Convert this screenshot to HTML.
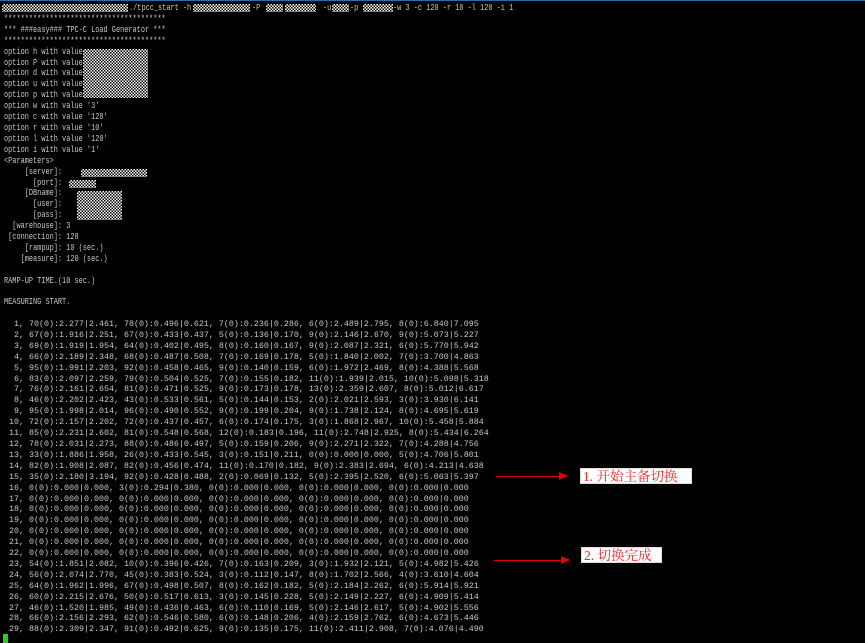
<!DOCTYPE html>
<html><head><meta charset="utf-8"><style>
html,body{margin:0;padding:0;background:#000;width:865px;height:643px;overflow:hidden;position:relative}
.top{position:absolute;left:0;top:0;width:865px;height:1px;background:#2a6bb5}
pre{margin:0;position:absolute;left:4px;font-family:"Liberation Mono",monospace;color:#c9c9c9;white-space:pre}
#h{top:3px;font-size:9.2px;line-height:10.9px;transform:scaleX(0.752);transform-origin:0 0}
.c{position:absolute;top:3px;font-family:"Liberation Mono",monospace;color:#c9c9c9;white-space:pre;font-size:9.2px;line-height:10.9px;transform:scaleX(0.752);transform-origin:0 0}
#d{top:319px;left:4px;font-size:8.33px;line-height:10.9px}
.ck{position:absolute;background:repeating-conic-gradient(#fff 0 25%,#000 0 50%) 0 0/3px 3px}
.bx{position:absolute;background:#fff;color:#ff2020;font-family:"Liberation Serif","Noto Serif CJK SC",serif;font-size:13.5px;line-height:16px;padding:0 2px;box-sizing:border-box;white-space:nowrap;border:1px solid #ddd}
.ln{position:absolute;height:1px;background:#e00000}
.ah{position:absolute;width:0;height:0;border-top:4px solid transparent;border-bottom:4px solid transparent;border-left:9px solid #e00000}
.cur{position:absolute;left:3px;top:634px;width:5px;height:9px;background:#22d022}
</style></head><body>
<div class="top"></div>
<div class="c" style="left:129px">./tpcc_start -h</div>
<div class="c" style="left:252px">-P</div>
<div class="c" style="left:274px">-d</div>
<div class="c" style="left:323px">-u</div>
<div class="c" style="left:350px">-p</div>
<div class="c" style="left:393px">-w 3 -c 128 -r 10 -l 120 -i 1</div>
<pre id="h">

***************************************
*** ###easy### TPC-C Load Generator ***
***************************************
option h with value
option P with value
option d with value
option u with value
option p with value
option w with value '3'
option c with value '128'
option r with value '10'
option l with value '120'
option i with value '1'
&lt;Parameters&gt;
     [server]:
       [port]:
     [DBname]:
       [user]:
       [pass]:
  [warehouse]: 3
 [connection]: 128
     [rampup]: 10 (sec.)
    [measure]: 120 (sec.)

RAMP-UP TIME.(10 sec.)

MEASURING START.
</pre>
<pre id="d">  1, 70(0):2.277|2.461, 78(0):0.496|0.621, 7(0):0.236|0.286, 6(0):2.489|2.795, 8(0):6.840|7.095
  2, 67(0):1.916|2.251, 67(0):0.433|0.437, 5(0):0.136|0.170, 9(0):2.146|2.670, 9(0):5.073|5.227
  3, 69(0):1.919|1.954, 64(0):0.402|0.495, 8(0):0.160|0.167, 9(0):2.087|2.321, 6(0):5.770|5.942
  4, 66(0):2.189|2.348, 68(0):0.487|0.508, 7(0):0.169|0.178, 5(0):1.840|2.002, 7(0):3.700|4.863
  5, 95(0):1.991|2.203, 92(0):0.458|0.465, 9(0):0.140|0.159, 6(0):1.972|2.469, 8(0):4.388|5.568
  6, 83(0):2.097|2.259, 79(0):0.504|0.525, 7(0):0.155|0.182, 11(0):1.939|2.015, 10(0):5.098|5.318
  7, 76(0):2.161|2.654, 81(0):0.471|0.525, 9(0):0.173|0.178, 13(0):2.359|2.607, 8(0):5.012|6.617
  8, 46(0):2.202|2.423, 43(0):0.533|0.561, 5(0):0.144|0.153, 2(0):2.021|2.593, 3(0):3.930|6.141
  9, 95(0):1.998|2.014, 96(0):0.490|0.552, 9(0):0.199|0.204, 9(0):1.738|2.124, 8(0):4.695|5.619
 10, 72(0):2.157|2.202, 72(0):0.437|0.457, 6(0):0.174|0.175, 3(0):1.868|2.967, 10(0):5.458|5.884
 11, 85(0):2.231|2.602, 81(0):0.548|0.568, 12(0):0.183|0.196, 11(0):2.748|2.925, 8(0):5.434|6.264
 12, 78(0):2.031|2.273, 88(0):0.486|0.497, 5(0):0.159|0.206, 9(0):2.271|2.322, 7(0):4.288|4.756
 13, 33(0):1.886|1.958, 26(0):0.433|0.545, 3(0):0.151|0.211, 0(0):0.000|0.000, 5(0):4.706|5.801
 14, 82(0):1.908|2.087, 82(0):0.456|0.474, 11(0):0.170|0.182, 9(0):2.383|2.694, 6(0):4.213|4.638
 15, 35(0):2.180|3.194, 92(0):0.428|0.488, 2(0):0.069|0.132, 5(0):2.395|2.520, 6(0):5.063|5.397
 16, 0(0):0.000|0.000, 3(0):0.294|0.380, 0(0):0.000|0.000, 0(0):0.000|0.000, 0(0):0.000|0.000
 17, 0(0):0.000|0.000, 0(0):0.000|0.000, 0(0):0.000|0.000, 0(0):0.000|0.000, 0(0):0.000|0.000
 18, 0(0):0.000|0.000, 0(0):0.000|0.000, 0(0):0.000|0.000, 0(0):0.000|0.000, 0(0):0.000|0.000
 19, 0(0):0.000|0.000, 0(0):0.000|0.000, 0(0):0.000|0.000, 0(0):0.000|0.000, 0(0):0.000|0.000
 20, 0(0):0.000|0.000, 0(0):0.000|0.000, 0(0):0.000|0.000, 0(0):0.000|0.000, 0(0):0.000|0.000
 21, 0(0):0.000|0.000, 0(0):0.000|0.000, 0(0):0.000|0.000, 0(0):0.000|0.000, 0(0):0.000|0.000
 22, 0(0):0.000|0.000, 0(0):0.000|0.000, 0(0):0.000|0.000, 0(0):0.000|0.000, 0(0):0.000|0.000
 23, 54(0):1.851|2.082, 10(0):0.396|0.426, 7(0):0.163|0.209, 3(0):1.932|2.121, 5(0):4.982|5.426
 24, 56(0):2.074|2.770, 45(0):0.383|0.524, 3(0):0.112|0.147, 8(0):1.702|2.566, 4(0):3.610|4.604
 25, 64(0):1.962|1.996, 67(0):0.498|0.507, 8(0):0.162|0.182, 5(0):2.184|2.262, 6(0):5.914|5.921
 26, 60(0):2.215|2.676, 50(0):0.517|0.613, 3(0):0.145|0.228, 5(0):2.149|2.227, 6(0):4.909|5.414
 27, 46(0):1.520|1.985, 49(0):0.436|0.463, 6(0):0.110|0.169, 5(0):2.146|2.617, 5(0):4.902|5.556
 28, 66(0):2.156|2.293, 62(0):0.546|0.580, 6(0):0.148|0.206, 4(0):2.159|2.762, 6(0):4.673|5.446
 29, 88(0):2.309|2.347, 91(0):0.492|0.625, 9(0):0.135|0.175, 11(0):2.411|2.908, 7(0):4.076|4.490</pre>
<div class="ck" style="left:2px;top:4px;width:126px;height:8px"></div>
<div class="ck" style="left:193px;top:4px;width:57px;height:8px"></div>
<div class="ck" style="left:266px;top:4px;width:17px;height:8px"></div>
<div class="ck" style="left:285px;top:4px;width:31px;height:8px"></div>
<div class="ck" style="left:332px;top:4px;width:17px;height:8px"></div>
<div class="ck" style="left:363px;top:4px;width:30px;height:8px"></div>
<div class="ck" style="left:83px;top:49px;width:65px;height:49px"></div>
<div class="ck" style="left:81px;top:169px;width:66px;height:8px"></div>
<div class="ck" style="left:69px;top:180px;width:27px;height:8px"></div>
<div class="ck" style="left:77px;top:191px;width:45px;height:29px"></div>
<div class="ln" style="left:496px;top:476px;width:64px"></div>
<div class="ah" style="left:559px;top:472px"></div>
<div class="bx" style="left:580px;top:468px;width:112px;height:16px">1. 开始主备切换</div>
<div class="ln" style="left:494px;top:560px;width:68px"></div>
<div class="ah" style="left:561px;top:556px"></div>
<div class="bx" style="left:581px;top:547px;width:81px;height:16px">2. 切换完成</div>
<div class="cur"></div>
</body></html>
